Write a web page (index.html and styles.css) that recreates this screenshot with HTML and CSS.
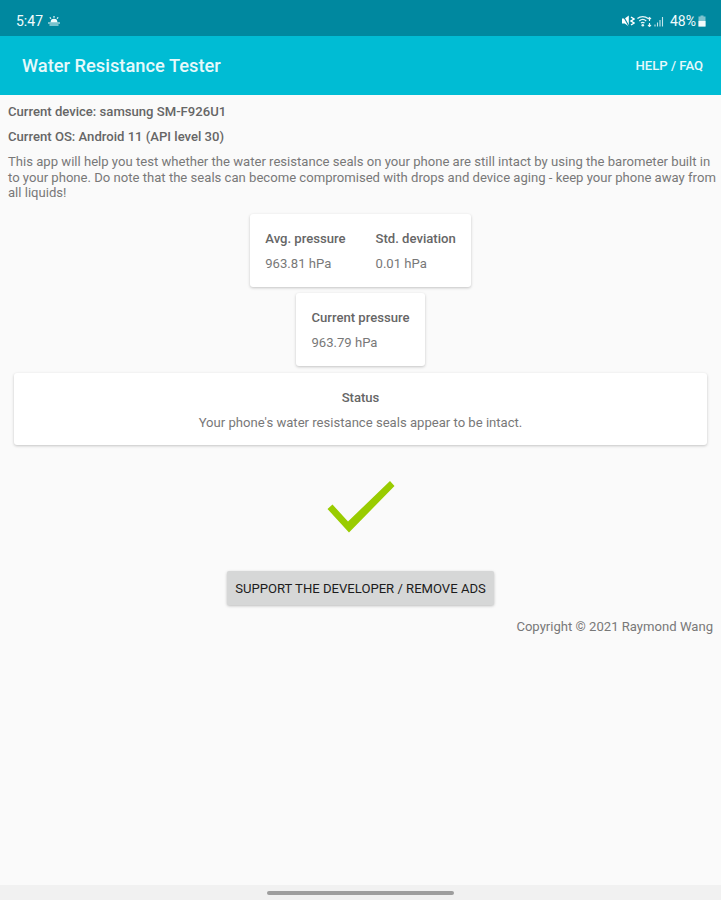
FILE: index.html
```html
<!DOCTYPE html>
<html lang="en">

<head>
  <meta charset="UTF-8" />
  <meta name="viewport" content="width=device-width, initial-scale=1.0" />
  <title>Water Resistance Tester</title>
  <link rel="stylesheet" href="styles.css">
</head>

<body>
  <div class="status-bar">
    <div class="status-left">
      <span>5:47</span>
      <svg class="sun-icon" width="12" height="10" viewBox="0 0 12 10">
        <path d="M2.6 6.2a3.4 3.4 0 0 1 6.8 0z" fill="#f2fbfc" />
        <path d="M6 0v1.8M1.8 1.3L3 2.6M10.200 1.300L9 2.600" stroke="#f2fbfc" stroke-width="1.2" />
        <path d="M0 7h12M1.500 9h9" stroke="#f2fbfc" stroke-width="1.2" />
      </svg>
    </div>
    <div class="status-right">
      <svg width="13" height="12" viewBox="0 0 13 12">
        <path d="M0 3.500h2.800L6.800 .5v11l-4-3H0z" fill="#fff" />
        <path d="M.8 .3l6.400 11.400" stroke="#00889f" stroke-width="1.1" />
        <path d="M9 2l3 2-3 2 3 2-3 2" stroke="#fff" stroke-width="1.5" fill="none" />
      </svg>
      <svg width="15" height="12" viewBox="0 0 15 12">
        <path d="M.4 3.600a8.500 8.500 0 0 1 10.700 0M2.300 5.900a5.300 5.300 0 0 1 6.900 0M4 8.100a2.700 2.700 0 0 1 3.500 0" stroke="#e4f5f7" stroke-width="1.3" fill="none" />
        <circle cx="5.800" cy="10.200" r="1.300" fill="#e4f5f7" />
        <path d="M12.500 2.500V6M11 4l1.500-1.500L14 4M12.500 11.500V8M11 10l1.500 1.500L14 10" stroke="#e4f5f7" stroke-width="1.1" fill="none" />
      </svg>
      <svg width="11" height="12" viewBox="0 0 11 12">
        <path d="M1 11.500v-2M3.500 11.500v-4M6 11.500V5M8.500 11.500V2" stroke="#c4e6eb" stroke-width="1.1" />
      </svg>
      <span class="battery-text">48%</span>
      <svg width="8" height="12" viewBox="0 0 8 12">
        <path d="M2.500 .5h3v1h2v10H.5v-10h2z" fill="#7fc3cf" />
        <path d="M.5 6h7v5.500H.5z" fill="#f2fbfc" />
      </svg>
    </div>
  </div>

  <header class="app-bar">
    <h1>Water Resistance Tester</h1>
    <span class="help-link">HELP / FAQ</span>
  </header>

  <main class="content">
    <p class="info-line">Current device: samsung SM-F926U1</p>
    <p class="info-line">Current OS: Android 11 (API level 30)</p>
    <p class="intro">This app will help you test whether the water resistance seals on your phone are still intact by using the barometer built in to your phone. Do note that the seals can become compromised with drops and device aging - keep your phone away from all liquids!</p>

    <div class="card card-stats">
      <div class="stat">
        <h3>Avg. pressure</h3>
        <p>963.81 hPa</p>
      </div>
      <div class="stat">
        <h3>Std. deviation</h3>
        <p>0.01 hPa</p>
      </div>
    </div>

    <div class="card card-current">
      <div class="stat">
        <h3>Current pressure</h3>
        <p>963.79 hPa</p>
      </div>
    </div>

    <div class="card card-status">
      <h3>Status</h3>
      <p>Your phone's water resistance seals appear to be intact.</p>
    </div>

    <svg class="check" width="68" height="54" viewBox="0 0 68 54">
      <polygon points="0.500,30 5.500,25.500 21,42.500 63,2 67.500,7 22,53.500" fill="#99cc00" />
    </svg>

    <button class="support-btn">SUPPORT THE DEVELOPER / REMOVE ADS</button>

    <p class="copyright">Copyright © 2021 Raymond Wang</p>
  </main>

  <div class="nav-bar">
    <div class="nav-handle"></div>
  </div>
</body>

</html>
```

FILE: styles.css
```css
* {
  margin: 0;
  padding: 0;
  box-sizing: border-box;
}

html,
body {
  height: 100%;
}

body {
  display: flex;
  flex-direction: column;
  background: #fafafa;
  color: #787878;
  font-family: Roboto, "Liberation Sans", sans-serif;
  font-size: 13.1px;
  overflow: hidden;
}

.status-bar {
  height: 36px;
  flex-shrink: 0;
  display: flex;
  justify-content: space-between;
  align-items: center;
  padding: 6px 15px 0 16px;
  background: #00889f;
  color: #f2fbfc;
  font-size: 14px;
}

.status-left,
.status-right {
  display: flex;
  align-items: center;
}

.sun-icon {
  margin-left: 5px;
}

.status-right svg {
  margin-left: 2px;
}

.battery-text {
  margin-left: 5px;
}

.app-bar {
  height: 59px;
  flex-shrink: 0;
  display: flex;
  justify-content: space-between;
  align-items: center;
  padding: 0 18px 0 22px;
  background: #00bcd4;
  color: #e6f9fb;
}

.app-bar h1 {
  font-size: 18.3px;
  font-weight: 500;
}

.help-link {
  font-size: 13.1px;
  font-weight: 500;
}

.content {
  flex: 1;
  display: flex;
  flex-direction: column;
  align-items: center;
  padding: 9px 7px 0;
}

.info-line {
  align-self: stretch;
  height: 25px;
  margin-left: 1px;
  font-weight: 500;
  color: #666;
  line-height: 16px;
}

.intro {
  align-self: stretch;
  line-height: 15.5px;
  margin-left: 1px;
  margin-right: -4px;
  margin-bottom: 13px;
}

.card {
  background: #fff;
  border-radius: 3px;
  box-shadow: 0 1px 3px rgba(0, 0, 0, 0.22);
  text-align: left;
}

.card h3 {
  font-size: 13.1px;
  font-weight: 500;
  color: #666;
  line-height: 16px;
  margin-bottom: 9px;
}

.card p {
  line-height: 16px;
}

.card-stats {
  display: flex;
  gap: 30px;
  padding: 17px 15px 15px;
  margin-bottom: 6px;
}

.card-current {
  padding: 17px 15px 15px;
  margin-bottom: 7px;
}

.card-status {
  width: 693px;
  padding: 17px 15px 14px;
  text-align: center;
}

.check {
  margin-top: 34px;
}

.support-btn {
  width: 267px;
  height: 34px;
  margin-top: 38px;
  padding-top: 1px;
  border: none;
  border-radius: 2px;
  background: #d6d7d7;
  box-shadow: 0 1px 3px rgba(0, 0, 0, 0.25);
  color: #1c1c1c;
  font-family: inherit;
  font-size: 13.1px;
}

.copyright {
  align-self: flex-end;
  margin-top: 14px;
  margin-right: 1px;
  line-height: 16px;
}

.nav-bar {
  height: 15px;
  flex-shrink: 0;
  display: flex;
  justify-content: center;
  align-items: center;
  background: #f1f1f1;
}

.nav-handle {
  width: 187px;
  height: 4px;
  border-radius: 2px;
  background: #9e9e9e;
}
```
